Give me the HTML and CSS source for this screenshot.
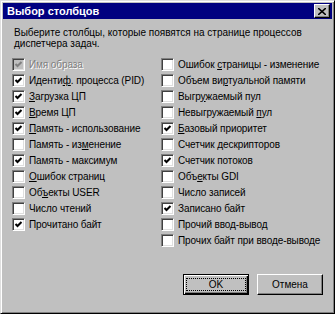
FILE: index.html
```html
<!DOCTYPE html>
<html lang="ru">
  <head>
    <meta charset="UTF-8" />
    <title>Выбор столбцов</title>
    <link rel="stylesheet" href="styles.css">
  </head>
  <body>
    <div class="dialog">
      <div class="titlebar">
        <span class="title">Выбор столбцов</span>
        <span class="close_btn">
          <svg width="8" height="7" viewBox="0 0 8 7"><path d="M0 0 L8 7 M8 0 L0 7" stroke="#000" stroke-width="1.6"/></svg>
        </span>
      </div>
      <div class="content">
        <p class="desc">Выберите столбцы, которые появятся на странице процессов диспетчера задач.</p>
        <div class="columns">
          <div class="col">
            <label class="item disabled"><span class="box on"></span><span>Имя образа</span></label>
            <label class="item"><span class="box on"></span><span>Иденти<u>ф</u>. процесса (PID)</span></label>
            <label class="item"><span class="box on"></span><span><u>З</u>агрузка ЦП</span></label>
            <label class="item"><span class="box on"></span><span><u>В</u>ремя ЦП</span></label>
            <label class="item"><span class="box on"></span><span><u>П</u>амять - использование</span></label>
            <label class="item"><span class="box"></span><span>Память - из<u>м</u>енение</span></label>
            <label class="item"><span class="box on"></span><span>Память - максимум</span></label>
            <label class="item"><span class="box"></span><span><u>О</u>шибок страниц</span></label>
            <label class="item"><span class="box"></span><span>Об<u>ъ</u>екты USER</span></label>
            <label class="item"><span class="box"></span><span>Число чтений</span></label>
            <label class="item"><span class="box on"></span><span>Прочитано байт</span></label>
          </div>
          <div class="col">
            <label class="item"><span class="box"></span><span>Ошибок <u>с</u>траницы - изменение</span></label>
            <label class="item"><span class="box"></span><span>Объем ви<u>р</u>туальной памяти</span></label>
            <label class="item"><span class="box"></span><span>Выгр<u>у</u>жаемый пул</span></label>
            <label class="item"><span class="box"></span><span>Невыгружаемый <u>п</u>ул</span></label>
            <label class="item"><span class="box on"></span><span><u>Б</u>азовый приоритет</span></label>
            <label class="item"><span class="box"></span><span>Счетчик <u>д</u>ескрипторов</span></label>
            <label class="item"><span class="box on"></span><span>Счетчик потоков</span></label>
            <label class="item"><span class="box"></span><span>Объ<u>е</u>кты GDI</span></label>
            <label class="item"><span class="box"></span><span>Число записей</span></label>
            <label class="item"><span class="box on"></span><span>Записано байт</span></label>
            <label class="item"><span class="box"></span><span>Прочий ввод-вывод</span></label>
            <label class="item"><span class="box"></span><span>Прочих байт при вводе-выводе</span></label>
          </div>
        </div>
        <div class="buttons">
          <button class="btn default"><span>OK</span></button>
          <button class="btn"><span>Отмена</span></button>
        </div>
      </div>
    </div>
  </body>
</html>
```
FILE: styles.css
```css
  body {
    margin: 0;
    font-family: "Liberation Sans", Arial, sans-serif;
    font-size: 10px;
    color: #000;
  }

  /* окно */
  .dialog {
    box-sizing: border-box;
    width: 335px;
    height: 314px;
    background: #c0c0c0;
    border: 1px solid;
    border-color: #dfdfdf #000 #000 #dfdfdf;
    box-shadow: inset 1px 1px #fff, inset -1px -1px #808080;
    padding: 2px;
  }

  .titlebar {
    height: 16px;
    background: #000080;
    display: flex;
    align-items: center;
    justify-content: space-between;
    padding: 0 2px 0 4px;
  }
  .title {
    color: #fff;
    font-weight: bold;
    font-size: 11px;
  }
  .close_btn {
    box-sizing: border-box;
    width: 16px;
    height: 14px;
    background: #c0c0c0;
    border: 1px solid;
    border-color: #fff #000 #000 #fff;
    box-shadow: inset -1px -1px #808080;
    display: flex;
    align-items: center;
    justify-content: center;
  }

  .content {
    padding: 0 8px 0 9px;
  }
  .desc {
    margin: 8px 0 7px 2px;
    line-height: 11px;
    width: 300px;
  }

  /* чекбоксы */
  .columns {
    display: grid;
    grid-template-columns: 149px 1fr;
  }
  .item {
    display: flex;
    align-items: center;
    height: 16px;
    white-space: nowrap;
    letter-spacing: -0.1px;
  }
  .box {
    box-sizing: border-box;
    width: 13px;
    height: 13px;
    margin-right: 4px;
    background: #fff;
    border: 1px solid;
    border-color: #808080 #fff #fff #808080;
    box-shadow: inset 1px 1px #404040, inset -1px -1px #dfdfdf;
    flex: none;
  }
  .box.on {
    background: #fff url("data:image/svg+xml,%3Csvg xmlns='http://www.w3.org/2000/svg' width='11' height='11'%3E%3Cpath d='M2.5 5 L4.5 7 L8.5 3' fill='none' stroke='%23000' stroke-width='2'/%3E%3C/svg%3E") no-repeat;
  }
  .item u {
    text-decoration: underline;
  }
  .disabled {
    color: #808080;
    text-shadow: 1px 1px #fff;
  }
  .disabled .box {
    background-color: #c0c0c0;
    background-image: url("data:image/svg+xml,%3Csvg xmlns='http://www.w3.org/2000/svg' width='11' height='11'%3E%3Cpath d='M2.5 5 L4.5 7 L8.5 3' fill='none' stroke='%23808080' stroke-width='2'/%3E%3C/svg%3E");
  }

  /* кнопки */
  .buttons {
    display: flex;
    justify-content: flex-end;
    gap: 8px;
    margin-top: 26px;
    padding-right: 1px;
  }
  .btn {
    box-sizing: border-box;
    width: 66px;
    height: 21px;
    background: #c0c0c0;
    border: 1px solid;
    border-color: #fff #000 #000 #fff;
    box-shadow: inset -1px -1px #808080;
    font: inherit;
    font-size: 10px;
    padding: 0;
  }
  .btn.default {
    border-color: #000;
    box-shadow: inset 1px 1px #fff, inset -1px -1px #000, inset -2px -2px #808080;
  }
  .btn.default span {
    display: block;
    margin: 3px;
    line-height: 11px;
    outline: 1px dotted #000;
  }
```
